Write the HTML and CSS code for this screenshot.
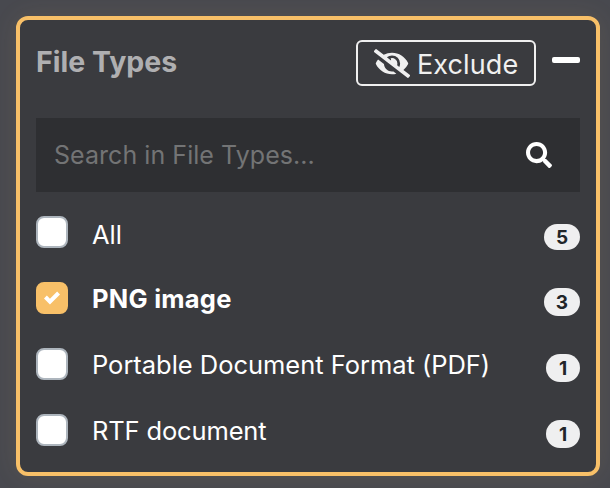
FILE: index.html
```html
<!DOCTYPE html>
<html lang="en">
<head>
<meta charset="utf-8">
<title>File Types</title>
<link rel="stylesheet" href="styles.css">
</head>
<body>
<section class="card">
  <header class="header">
    <h2 class="title"><span>File Types</span></h2>
    <button class="exclude" type="button">
      <svg class="eye" viewBox="0 0 640 512"><path fill="currentColor" d="M320 400c-75.85 0-137.25-58.71-142.9-133.11L72.2 185.82c-13.79 17.3-26.48 35.59-36.72 55.59a32.35 32.35 0 0 0 0 29.19C89.71 376.41 197.07 448 320 448c26.91 0 52.87-4 77.89-10.46L346 397.39a144.13 144.13 0 0 1-26 2.61zm313.82 58.1l-110.55-85.44a331.25 331.25 0 0 0 81.25-102.07 32.35 32.35 0 0 0 0-29.19C550.29 135.59 442.93 64 320 64a308.15 308.15 0 0 0-147.32 37.7L45.46 3.37A16 16 0 0 0 23 6.18L3.37 31.45A16 16 0 0 0 6.18 53.9l588.36 454.73a16 16 0 0 0 22.46-2.81l19.64-25.27a16 16 0 0 0-2.82-22.45zm-183.72-142l-39.3-30.38A94.75 94.75 0 0 0 416 256a94.76 94.76 0 0 0-121.31-92.21A47.65 47.65 0 0 1 304 192a46.64 46.64 0 0 1-1.54 10l-73.61-56.89A142.31 142.31 0 0 1 320 112a143.92 143.92 0 0 1 144 144c0 21.63-5.29 41.79-13.9 60.11z"/></svg>
      <span>Exclude</span>
    </button>
    <div class="collapse"></div>
  </header>
  <div class="search">
    <span class="placeholder">Search in File Types...</span>
    <svg class="glass" viewBox="0 0 512 512"><path fill="currentColor" d="M505 442.7L405.3 343c-4.5-4.5-10.6-7-17-7H372c27.6-35.3 44-79.7 44-128C416 93.1 322.9 0 208 0S0 93.1 0 208s93.1 208 208 208c48.3 0 92.7-16.4 128-44v16.3c0 6.4 2.5 12.5 7 17l99.7 99.7c9.4 9.4 24.6 9.4 33.9 0l28.3-28.3c9.4-9.4 9.4-24.6.1-34zM208 336c-70.7 0-128-57.2-128-128 0-70.7 57.2-128 128-128 70.7 0 128 57.2 128 128 0 70.7-57.2 128-128 128z"/></svg>
  </div>
  <ul class="list">
    <li class="row"><span class="box"></span><span class="label all">All</span><span class="badge wide short">5</span></li>
    <li class="row"><span class="box checked"><svg class="check" viewBox="0 0 8 8"><path fill="#fff" d="M6.564.75l-3.59 3.612-1.538-1.55L0 4.26 2.974 7.25 8 2.193z"/></svg></span><span class="label bold">PNG image</span><span class="badge wide">3</span></li>
    <li class="row"><span class="box"></span><span class="label">Portable Document Format (PDF)</span><span class="badge">1</span></li>
    <li class="row"><span class="box"></span><span class="label rtf">RTF document</span><span class="badge">1</span></li>
  </ul>
</section>
</body>
</html>
```
FILE: styles.css
```css
* { box-sizing: border-box; }
body {
  margin: 0;
  padding: 16px 10px 12px 16px;
  height: 488px;
  overflow: hidden;
  background: #48494f;
  font-family: Inter, "Liberation Sans", sans-serif;
}
.card {
  height: 460px;
  padding: 20px 16px;
  border: 4px solid #f8c068;
  border-radius: 12px;
  background: #3a3b3f;
  box-shadow: 0 0 26px rgba(248, 192, 104, 0.09);
}
.header { display: flex; height: 46px; }
.title {
  flex: 1;
  margin: 0;
  color: #afafb1;
  font-size: 28.5px;
  font-weight: 700;
  line-height: 44px;
  white-space: nowrap;
}
.exclude {
  display: flex;
  align-items: center;
  gap: 7px;
  width: 180px;
  height: 46px;
  margin: 0;
  padding: 0 0 0 16px;
  border: 2px solid #f0f0f0;
  border-radius: 6px;
  background: transparent;
  color: #f0f0f0;
  font: 400 27px/42px Inter, "Liberation Sans", sans-serif;
  letter-spacing: 0.1px;
  white-space: nowrap;
}
.exclude span { padding-top: 3px; }
.eye { width: 36px; height: 29px; }
.collapse {
  width: 28px;
  height: 6px;
  margin: 17px 0 0 16px;
  border-radius: 2px;
  background: #fff;
}
.search {
  display: flex;
  align-items: center;
  justify-content: space-between;
  height: 74px;
  margin-top: 32px;
  padding: 0 28px 0 18px;
  background: #2e2f32;
}
.placeholder { color: #737475; font-size: 25px; letter-spacing: 0.05px; }
.glass { width: 26px; height: 26px; color: #fff; }
.list { margin: 24px 0 0; padding: 0; list-style: none; }
.row { display: flex; height: 66px; color: #fff; }
.box {
  display: flex;
  align-items: center;
  justify-content: center;
  flex: none;
  width: 32px;
  height: 32px;
  border: 2px solid #adb5bd;
  border-radius: 8px;
  background: #fff;
}
.checked { border-color: #f8c068; background: #f8c068; }
.check { width: 16px; height: 16px; }
.label {
  flex: 1;
  margin-left: 24px;
  font-size: 25.5px;
  line-height: 34px;
  letter-spacing: -0.03px;
  white-space: nowrap;
}
.all { line-height: 38px; }
.bold { font-weight: 700; letter-spacing: 0.25px; }
.rtf { letter-spacing: -0.15px; }
.badge {
  width: 34px;
  height: 28px;
  margin-top: 6px;
  border-radius: 14px;
  background: #efeff0;
  color: #212529;
  font-size: 19px;
  font-weight: 700;
  line-height: 30px;
  text-align: center;
}
.wide { width: 36px; }
.short { height: 26px; margin-top: 8px; line-height: 27px; }
```
